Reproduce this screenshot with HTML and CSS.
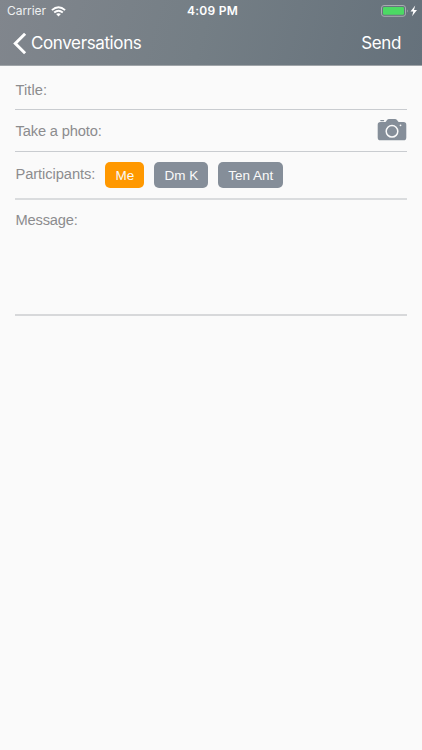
FILE: index.html
```html
<!DOCTYPE html>
<html lang="en">
<head>
<meta charset="utf-8">
<title>New conversation</title>
<link rel="stylesheet" href="styles.css">
</head>
<body>
<header class="header">
  <div class="status">
    <div class="status-left">
      <span class="carrier">Carrier</span>
      <svg class="wifi" width="15" height="11" viewBox="0 0 15 11" fill="none" stroke="#fff" stroke-width="1.9">
        <path d="M.9 4.1Q7.5-1.8 14.1 4.1M3.2 6.5Q7.5 2.8 11.8 6.5"/>
        <path d="M5.1 8.1Q7.5 6.2 9.9 8.1L7.5 10.6Z" fill="#fff" stroke="none"/>
      </svg>
    </div>
    <span class="time">4:09 PM</span>
    <div class="status-right">
      <svg width="37" height="12" viewBox="0 0 37 12">
        <rect x=".5" y=".5" width="24" height="10.8" rx="2.5" fill="none" stroke="#a7acb0"/>
        <rect x="2" y="2" width="21" height="7.8" rx="1.2" fill="#4cd964"/>
        <path d="M26 4.2Q27.6 5.9 26 7.6Z" fill="#a7acb0"/>
        <path d="M34.2 .5L29.5 6.6H32.3L31.1 11.2L36 5H33Z" fill="#fff"/>
      </svg>
    </div>
  </div>
  <nav class="nav">
    <a class="back">
      <svg width="14" height="22" viewBox="0 0 14 22" fill="none" stroke="#fff" stroke-width="3"><path d="M12.1 .7L2.3 10.5L12.1 20.3"/></svg>
      <span class="back-label">Conversations</span>
    </a>
    <a class="send">Send</a>
  </nav>
</header>
<main class="form">
  <div class="row title-row"><span class="label title">Title:</span></div>
  <div class="row photo-row">
    <span class="label photo">Take a photo:</span>
    <svg class="camera" width="30" height="23" viewBox="-.5 .4 30 23">
      <path fill="#858e99" d="M3 3.5H7.2Q8 3.5 8.5 2.8L9.5 1.3Q10.3.3 11.5.3H17.5Q18.7.3 19.5 1.3L20.6 2.8Q21.1 3.5 22 3.5H26Q28.8 3.5 28.8 6.2V18.8Q28.8 21.7 26 21.7H3Q.2 21.7.2 18.8V6.2Q.2 3.5 3 3.5Z"/>
      <rect x="2.7" y="1.3" width="4" height="1.3" rx=".6" fill="#858e99"/>
      <circle cx="14.5" cy="12.7" r="5.8" fill="none" stroke="#fafafa" stroke-width="1.5"/>
      <circle cx="23" cy="6.7" r=".9" fill="#fafafa"/>
    </svg>
  </div>
  <div class="row people-row">
    <span class="label people">Participants:</span>
    <div class="chips">
      <span class="chip me">Me</span>
      <span class="chip dm">Dm K</span>
      <span class="chip ten">Ten Ant</span>
    </div>
  </div>
  <div class="row message-row"><span class="label message">Message:</span></div>
</main>
</body>
</html>
```
FILE: styles.css
```css
* { box-sizing: border-box; }
body {
  margin: 0;
  min-height: 750px;
  background: #fafafa;
  font-family: "Liberation Sans", Arial, sans-serif;
}
.header {
  height: 66px;
  background: linear-gradient(105deg, #81868d 0%, #747e85 48%, #65717b 100%);
  border-bottom: 1px solid #a0a5a9;
  color: #fff;
  font-family: Inter, sans-serif;
}
.status {
  height: 22px;
  display: grid;
  grid-template-columns: 1fr auto 1fr;
  padding: 0 4px 0 7px;
  align-items: center;
}
.status-left { display: flex; align-items: center; gap: 5px; }
.carrier { font-size: 12px; line-height: 14px; letter-spacing: -.05px; color: #eef0f1; }
.time { font-size: 12px; line-height: 14px; font-weight: 600; letter-spacing: .25px; }
.status-right { display: flex; justify-content: flex-end; }
.nav {
  height: 42px;
  display: flex;
  align-items: center;
  justify-content: space-between;
  padding: 0 21px 0 13px;
}
.back { display: flex; align-items: center; gap: 4px; }
.back svg { overflow: visible; margin-top: 1px; }
.back-label, .send { font-size: 17px; line-height: 22px; letter-spacing: -.38px; }
.form { padding: 0 15px; }
.row { display: flex; align-items: center; border-bottom: 1px solid #c9ccd0; }
.label { font-size: 14.7px; line-height: 18px; padding-left: .5px; color: #8c8c8e; white-space: nowrap; }
.title { letter-spacing: .05px; }
.photo { letter-spacing: -.15px; }
.people { width: 80px; letter-spacing: -.08px; padding-bottom: 1px; }
.message { letter-spacing: -.2px; }
.title-row { height: 44px; padding-top: 4px; }
.photo-row { height: 42px; justify-content: space-between; }
.camera { overflow: visible; }
.people-row { height: 48px; padding-bottom: 1px; border-bottom: 2px solid #dadcde; }
.message-row { height: 116px; align-items: flex-start; padding-top: 11px; border-bottom: 2px solid #d7d8da; }
.chips { display: flex; gap: 10px; margin-left: 10.3px; }
.chip {
  height: 26px;
  border-radius: 5px;
  background: #858e99;
  color: #fafafa;
  font-size: 13.5px;
  line-height: 27px;
  text-align: center;
}
.me { width: 39px; background: #ff9800; }
.dm { width: 54px; }
.ten { width: 65px; }
```
